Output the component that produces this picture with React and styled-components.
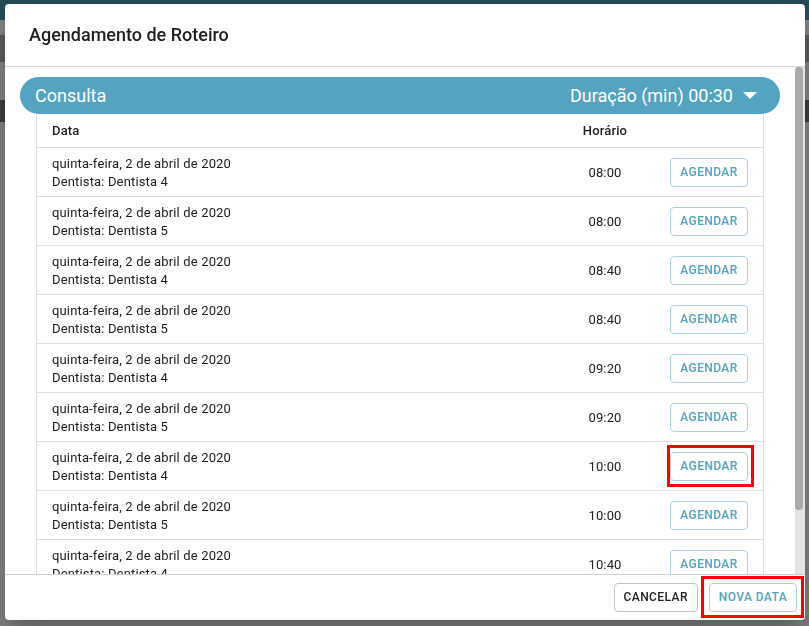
import styled, { createGlobalStyle } from 'styled-components';

const blue = '#53a3c1';
const slots = [
  { time: '08:00', dentist: 4 },
  { time: '08:00', dentist: 5 },
  { time: '08:40', dentist: 4 },
  { time: '08:40', dentist: 5 },
  { time: '09:20', dentist: 4 },
  { time: '09:20', dentist: 5 },
  { time: '10:00', dentist: 4, marked: true },
  { time: '10:00', dentist: 5 },
  { time: '10:40', dentist: 4 },
  { time: '10:40', dentist: 5 },
];

export default function App() {
  return (
    <>
      <GlobalStyle />
      <Page>
        <TopBar />
        <SubBar />
        <DarkBar />
        <Blank />
        <DarkBar tall />
      </Page>

      <Backdrop>
        <Dialog>
          <DialogHeader>
            <h2>Agendamento de Roteiro</h2>
          </DialogHeader>

          <DialogContent>
            <Scroller>
              <Pill>
                <span>Consulta</span>
                <span className="right">
                  Duração (min) 00:30
                  <svg width="14" height="7" viewBox="0 0 14 7">
                    <path d="M0 0h14L7 7z" fill="#fff" />
                  </svg>
                </span>
              </Pill>

              <Table>
                <HeadRow>
                  <span>Data</span>
                  <span className="center">Horário</span>
                  <span />
                </HeadRow>
                {slots.map((slot, i) => (
                  <Row key={i}>
                    <Info>
                      <p>quinta-feira, 2 de abril de 2020</p>
                      <p>Dentista: Dentista {slot.dentist}</p>
                    </Info>
                    <Time>{slot.time}</Time>
                    <Action>
                      {slot.marked ? (
                        <Marker top={-7} right={-6} bottom={-6} left={-3}>
                          <OutlineButton>Agendar</OutlineButton>
                        </Marker>
                      ) : (
                        <OutlineButton>Agendar</OutlineButton>
                      )}
                    </Action>
                  </Row>
                ))}
              </Table>
            </Scroller>

            <ScrollTrack>
              <ScrollThumb />
            </ScrollTrack>
          </DialogContent>

          <DialogFooter>
            <OutlineButton neutral wide>Cancelar</OutlineButton>
            <Marker top={-7} right={-7} bottom={-6} left={-8}>
              <OutlineButton wide>Nova data</OutlineButton>
            </Marker>
          </DialogFooter>
        </Dialog>
      </Backdrop>
    </>
  );
}

const GlobalStyle = createGlobalStyle`
  * { box-sizing: border-box; }
  html, body { margin: 0; height: 100%; }
  body {
    font-family: Roboto, "Liberation Sans", sans-serif;
    color: #212121;
    background: #fff;
  }
  p { margin: 0; }
`;

const Page = styled.div`
  display: flex;
  flex-direction: column;
  height: 100vh;
`;

const TopBar = styled.div`
  height: 20px;
  background: #4a96ae;
`;

const SubBar = styled.div`
  height: 15px;
  background: #fff;
`;

const DarkBar = styled.div`
  height: ${(p) => (p.tall ? '22px' : '27px')};
  background: ${(p) => (p.tall ? '#777' : '#b4b4b4')};
`;

const Blank = styled.div`
  height: 38px;
`;

const Backdrop = styled.div`
  position: fixed;
  inset: 0;
  background: rgba(0, 0, 0, 0.5);
  padding: 4px 4px 6px 5px;
  display: flex;
`;

const Dialog = styled.div`
  flex: 1;
  display: flex;
  flex-direction: column;
  background: #fff;
  border-radius: 4px;
  overflow: hidden;
  box-shadow: 0 11px 15px -7px rgba(0,0,0,0.2), 0 24px 38px 3px rgba(0,0,0,0.14);
`;

const DialogHeader = styled.div`
  height: 63px;
  padding: 0 24px;
  display: flex;
  align-items: center;
  border-bottom: 1px solid #d6d6d6;

  h2 {
    margin: 0;
    padding-bottom: 1px;
    font-size: 18px;
    font-weight: 500;
    color: #212121;
  }
`;

const DialogContent = styled.div`
  flex: 1;
  min-height: 0;
  display: flex;
`;

const Scroller = styled.div`
  flex: 1;
  overflow: hidden;
  padding: 10px 15px;
`;

const ScrollTrack = styled.div`
  width: 10px;
  background: #e4e4e4;
`;

const ScrollThumb = styled.div`
  width: 8px;
  height: 443px;
  background: #a9a9a9;
  border-radius: 4px;
`;

const Pill = styled.div`
  height: 37px;
  border-radius: 19px;
  background: ${blue};
  color: #fff;
  font-size: 18px;
  display: flex;
  align-items: center;
  justify-content: space-between;
  padding: 0 23px 0 15px;

  .right {
    display: flex;
    align-items: center;
    gap: 10px;
  }
`;

const Table = styled.div`
  margin: 0 16px;
  border-left: 1px solid #e0e0e0;
  border-right: 1px solid #e0e0e0;
  font-size: 13px;
  letter-spacing: 0.15px;
`;

const grid = `
  display: grid;
  grid-template-columns: 1fr 98px 110px;
  align-items: center;
  border-bottom: 1px solid #e0e0e0;
  padding-left: 15px;
`;

const HeadRow = styled.div`
  ${grid}
  height: 34px;
  font-weight: 500;
  padding-bottom: 1px;

  .center {
    text-align: center;
    padding-left: 2px;
  }
`;

const Row = styled.div`
  ${grid}
  height: 49px;
  line-height: 18px;
`;

const Info = styled.div`
  padding-top: 2px;
`;

const Time = styled.span`
  text-align: center;
  padding: 1px 0 0 2px;
  font-size: 13px;
`;

const Action = styled.div`
  display: flex;
  justify-content: flex-end;
  padding-right: 15px;
`;

const OutlineButton = styled.button`
  font-family: inherit;
  font-size: 12px;
  font-weight: 500;
  letter-spacing: 0.4px;
  text-transform: uppercase;
  height: 29px;
  width: ${(p) => (p.wide ? 'auto' : '78px')};
  padding: 0 ${(p) => (p.wide ? '9px' : '0')};
  border-radius: 4px;
  background: #fff;
  color: ${(p) => (p.neutral ? '#212121' : blue)};
  border: 1px solid ${(p) => (p.neutral ? '#c4c4c4' : '#a9d1e0')};
  cursor: pointer;
`;

const Marker = styled.span`
  position: relative;
  display: inline-flex;

  &::after {
    content: '';
    position: absolute;
    top: ${(p) => p.top}px;
    right: ${(p) => p.right}px;
    bottom: ${(p) => p.bottom}px;
    left: ${(p) => p.left}px;
    border: 3px solid #f00;
    pointer-events: none;
  }
`;

const DialogFooter = styled.div`
  height: 46px;
  border-top: 1px solid #d0d0d0;
  display: flex;
  align-items: center;
  justify-content: flex-end;
  gap: 11px;
  padding: 0 8px 1px;
`;
